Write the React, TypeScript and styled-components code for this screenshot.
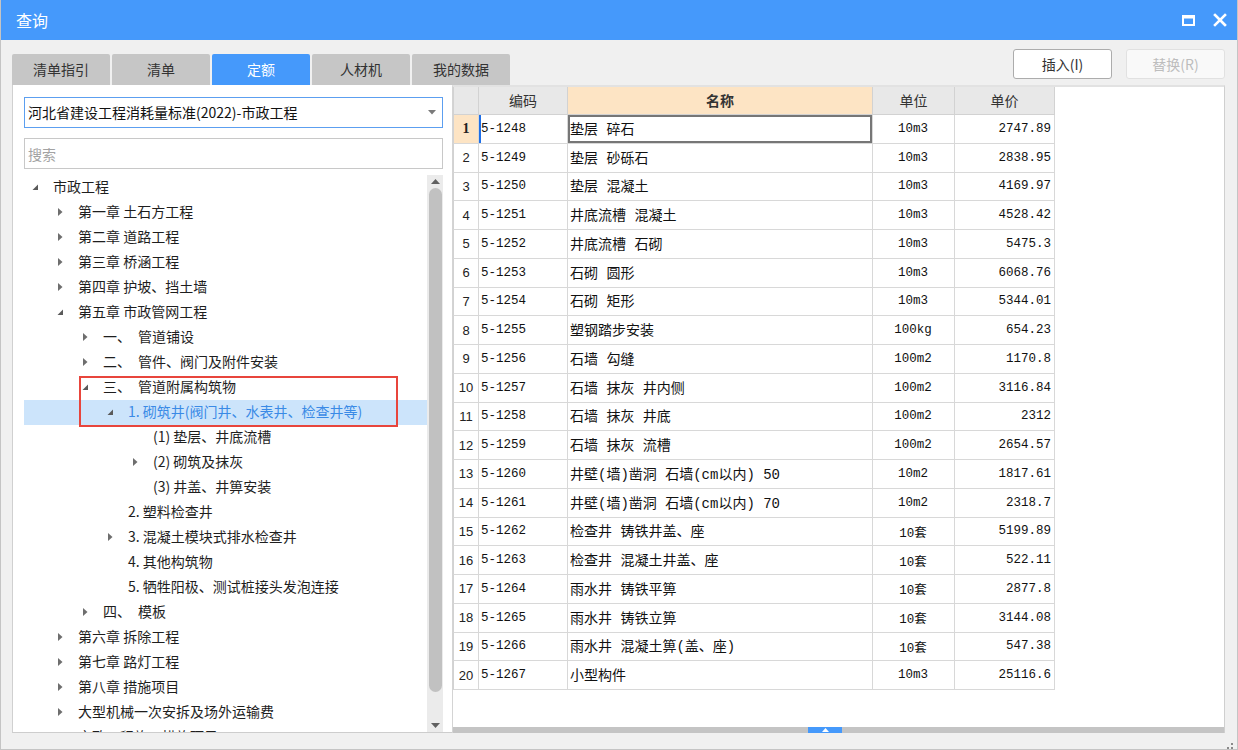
import React from 'react';
import styled, { createGlobalStyle } from 'styled-components';

const GlobalStyle = createGlobalStyle`
  html, body {
    margin: 0;
    padding: 0;
    background: #ffffff;
  }
  body {
    font-family: "Noto Sans CJK SC", "Liberation Sans", sans-serif;
  }
  * {
    box-sizing: border-box;
  }
`;

const Window = styled.div`
  position: relative;
  width: 1238px;
  height: 750px;
  display: flex;
  flex-direction: column;
  background: #f0f0f0;
  border: 1px solid #c4c4c4;
  border-top: none;
  overflow: hidden;
`;

const TitleBar = styled.div`
  flex: none;
  height: 40px;
  display: flex;
  align-items: center;
  padding: 0 10px 0 15px;
  background: #4599fb;
  color: #ffffff;
  font-size: 16px;
`;

const TitleText = styled.span`
  flex: 1;
`;

const WinControls = styled.div`
  display: flex;
  align-items: center;
  gap: 18px;
`;

const TopRow = styled.div`
  flex: none;
  height: 45px;
  display: flex;
  padding: 0 12px 0 11px;
`;

const Tabs = styled.div`
  align-self: flex-end;
  display: flex;
  gap: 2px;
`;

const Tab = styled.div<{ $active?: boolean }>`
  width: 98px;
  height: 31px;
  display: flex;
  align-items: center;
  justify-content: center;
  padding-bottom: 1px;
  border-radius: 2px 2px 0 0;
  font-size: 14px;
  background: ${({ $active }) => ($active ? '#4599fb' : '#c6c6c6')};
  color: ${({ $active }) => ($active ? '#ffffff' : '#333333')};
`;

const Buttons = styled.div`
  margin-left: auto;
  margin-top: 9px;
  display: flex;
  gap: 14px;
  align-self: flex-start;
`;

const Button = styled.div<{ $disabled?: boolean }>`
  width: 99px;
  height: 30px;
  display: flex;
  align-items: center;
  justify-content: center;
  border-radius: 3px;
  font-size: 14px;
  background: ${({ $disabled }) => ($disabled ? '#f9f9f9' : '#ffffff')};
  border: 1px solid ${({ $disabled }) => ($disabled ? '#e1e1e1' : '#acacac')};
  color: ${({ $disabled }) => ($disabled ? '#bdbdbd' : '#333333')};
`;

const Main = styled.div`
  flex: none;
  height: 648px;
  display: flex;
  padding: 0 12px 0 11px;
`;

const LeftPanel = styled.div`
  width: 440px;
  flex: none;
  display: flex;
  flex-direction: column;
  background: #ffffff;
  border-left: 1px solid #d0d0d0;
  border-bottom: 1px solid #cdcdcd;
  padding: 12px 9px 0 11px;
`;

const Dropdown = styled.div`
  height: 31px;
  flex: none;
  display: flex;
  align-items: center;
  justify-content: space-between;
  padding: 0 6px 1px 3px;
  border: 1px solid #5c9ff0;
  font-size: 14px;
  color: #111111;
`;

const Search = styled.input`
  height: 31px;
  flex: none;
  margin-top: 10px;
  padding: 0 3px;
  border: 1px solid #c8c8c8;
  outline: none;
  font-family: "Noto Sans CJK SC", sans-serif;
  font-size: 14px;
  color: #333333;
  &::placeholder {
    color: #a3a3a3;
  }
`;

const TreeArea = styled.div`
  position: relative;
  flex: 1;
  min-height: 0;
  margin-top: 6px;
  display: flex;
  overflow: hidden;
`;

const TreeList = styled.div`
  flex: 1;
  overflow: hidden;
`;

const TreeRow = styled.div<{ $level: number; $selected?: boolean }>`
  height: 25px;
  display: flex;
  align-items: center;
  padding-left: ${({ $level }) => 4 + $level * 25}px;
  padding-bottom: 3px;
  white-space: nowrap;
  font-size: 14px;
  background: ${({ $selected }) => ($selected ? '#cce4fb' : 'transparent')};
  color: ${({ $selected }) => ($selected ? '#3a8ae6' : '#1e1e1e')};
`;

const Toggle = styled.span`
  width: 14px;
  height: 14px;
  flex: none;
  margin-right: 11px;
  margin-top: 2px;
  display: flex;
  align-items: center;
  justify-content: center;
`;

const Highlight = styled.div`
  position: absolute;
  left: 55px;
  top: 201px;
  width: 319px;
  height: 51px;
  border: 2px solid #e8453c;
  pointer-events: none;
`;

const ScrollBar = styled.div`
  width: 16px;
  flex: none;
  display: flex;
  flex-direction: column;
  align-items: center;
  background: #ebebeb;
`;

const ScrollBtn = styled.div<{ $h: number }>`
  height: ${({ $h }) => $h}px;
  flex: none;
  display: flex;
  align-items: center;
  justify-content: center;
`;

const Thumb = styled.div`
  width: 13px;
  height: 504px;
  margin-top: 1px;
  flex: none;
  border-radius: 7px;
  background: #c1c1c1;
`;

const ScrollSpacer = styled.div`
  flex: 1;
`;

const RightPanel = styled.div`
  flex: 1;
  display: flex;
  flex-direction: column;
  border-left: 1px solid #d4d4d4;
  border-top: 2px solid #e2e2e2;
  border-right: 1px solid #cfcfcf;
`;

const GridArea = styled.div`
  flex: 1;
  background: #ffffff;
  overflow: hidden;
`;

const Grid = styled.div`
  display: grid;
  grid-template-columns: 26px 89px 305px 82px 100px;
  grid-template-rows: 28px repeat(20, 28.75px);
  width: max-content;
`;

const HeadCell = styled.div<{ $accent?: boolean; $first?: boolean }>`
  display: flex;
  align-items: center;
  justify-content: center;
  padding-bottom: 2px;
  font-size: 14px;
  color: #333333;
  background: ${({ $accent }) => ($accent ? '#fde4c4' : '#e8e8e8')};
  font-weight: ${({ $accent }) => ($accent ? 700 : 400)};
  border-right: 1px solid #d2d2d2;
  border-bottom: 1px solid #d2d2d2;
  border-left: ${({ $first }) => ($first ? '1px solid #d2d2d2' : 'none')};
`;

const Cell = styled.div<{ $align?: 'left' | 'center' | 'right'; $mono?: boolean }>`
  display: flex;
  align-items: center;
  justify-content: ${({ $align }) =>
    $align === 'right' ? 'flex-end' : $align === 'center' ? 'center' : 'flex-start'};
  padding: ${({ $mono }) => ($mono ? '0 3px 0 2px' : '0 3px 2px 2px')};
  white-space: pre;
  overflow: hidden;
  color: #111111;
  font-family: "Liberation Mono", "Noto Sans CJK SC", monospace;
  font-size: ${({ $mono }) => ($mono ? '12.5px' : '14px')};
  border-right: 1px solid #d8d8d8;
  border-bottom: 1px solid #d8d8d8;
`;

const NumCell = styled.div<{ $current?: boolean }>`
  display: flex;
  align-items: center;
  justify-content: center;
  font-family: ${({ $current }) => ($current ? '"Liberation Serif", serif' : '"Liberation Sans", sans-serif')};
  font-weight: ${({ $current }) => ($current ? 700 : 400)};
  font-size: ${({ $current }) => ($current ? '14px' : '13px')};
  color: #222222;
  background: ${({ $current }) => ($current ? '#fde4c4' : '#ffffff')};
  border-left: 1px solid #d2d2d2;
  border-right: 1px solid #d8d8d8;
  border-bottom: 1px solid #d8d8d8;
`;

const CodeCell = styled(Cell)<{ $current?: boolean }>`
  box-shadow: ${({ $current }) => ($current ? 'inset 2px 0 0 #1e6fe8' : 'none')};
`;

const NameCell = styled(Cell)<{ $current?: boolean }>`
  box-shadow: ${({ $current }) => ($current ? 'inset 0 0 0 2px #767676' : 'none')};
`;

const Splitter = styled.div`
  flex: none;
  height: 6px;
  background: #c4c4c4;
  display: flex;
`;

const SplitHandle = styled.div`
  width: 34px;
  margin-left: 355px;
  background: #4599fb;
  display: flex;
  align-items: center;
  justify-content: center;
`;

const Grip = styled.div`
  position: absolute;
  right: 3px;
  bottom: 3px;
  width: 11px;
  height: 11px;
`;

type Node = {
  level: number;
  text: string;
  state?: 'open' | 'closed';
  selected?: boolean;
};

const tree: Node[] = [
  { level: 0, text: '市政工程', state: 'open' },
  { level: 1, text: '第一章 土石方工程', state: 'closed' },
  { level: 1, text: '第二章 道路工程', state: 'closed' },
  { level: 1, text: '第三章 桥涵工程', state: 'closed' },
  { level: 1, text: '第四章 护坡、挡土墙', state: 'closed' },
  { level: 1, text: '第五章 市政管网工程', state: 'open' },
  { level: 2, text: '一、\u2002管道铺设', state: 'closed' },
  { level: 2, text: '二、\u2002管件、阀门及附件安装', state: 'closed' },
  { level: 2, text: '三、\u2002管道附属构筑物', state: 'open' },
  { level: 3, text: '1. 砌筑井(阀门井、水表井、检查井等)', state: 'open', selected: true },
  { level: 4, text: '(1) 垫层、井底流槽' },
  { level: 4, text: '(2) 砌筑及抹灰', state: 'closed' },
  { level: 4, text: '(3) 井盖、井箅安装' },
  { level: 3, text: '2. 塑料检查井' },
  { level: 3, text: '3. 混凝土模块式排水检查井', state: 'closed' },
  { level: 3, text: '4. 其他构筑物' },
  { level: 3, text: '5. 牺牲阳极、测试桩接头发泡连接' },
  { level: 2, text: '四、\u2002模板', state: 'closed' },
  { level: 1, text: '第六章 拆除工程', state: 'closed' },
  { level: 1, text: '第七章 路灯工程', state: 'closed' },
  { level: 1, text: '第八章 措施项目', state: 'closed' },
  { level: 1, text: '大型机械一次安拆及场外运输费', state: 'closed' },
  { level: 1, text: '市政工程施工措施项目', state: 'closed' },
];

const rows: [string, string, string, string][] = [
  ['5-1248', '垫层 碎石', '10m3', '2747.89'],
  ['5-1249', '垫层 砂砾石', '10m3', '2838.95'],
  ['5-1250', '垫层 混凝土', '10m3', '4169.97'],
  ['5-1251', '井底流槽 混凝土', '10m3', '4528.42'],
  ['5-1252', '井底流槽 石砌', '10m3', '5475.3'],
  ['5-1253', '石砌 圆形', '10m3', '6068.76'],
  ['5-1254', '石砌 矩形', '10m3', '5344.01'],
  ['5-1255', '塑钢踏步安装', '100kg', '654.23'],
  ['5-1256', '石墙 勾缝', '100m2', '1170.8'],
  ['5-1257', '石墙 抹灰 井内侧', '100m2', '3116.84'],
  ['5-1258', '石墙 抹灰 井底', '100m2', '2312'],
  ['5-1259', '石墙 抹灰 流槽', '100m2', '2654.57'],
  ['5-1260', '井壁(墙)凿洞 石墙(cm以内) 50', '10m2', '1817.61'],
  ['5-1261', '井壁(墙)凿洞 石墙(cm以内) 70', '10m2', '2318.7'],
  ['5-1262', '检查井 铸铁井盖、座', '10套', '5199.89'],
  ['5-1263', '检查井 混凝土井盖、座', '10套', '522.11'],
  ['5-1264', '雨水井 铸铁平箅', '10套', '2877.8'],
  ['5-1265', '雨水井 铸铁立箅', '10套', '3144.08'],
  ['5-1266', '雨水井 混凝土箅(盖、座)', '10套', '547.38'],
  ['5-1267', '小型构件', '10m3', '25116.6'],
];

const ToggleIcon = ({ state }: { state?: 'open' | 'closed' }) => {
  if (!state) return <Toggle />;
  return (
    <Toggle>
      <svg width="14" height="14" viewBox="0 0 14 14">
        {state === 'closed' ? (
          <polygon points="5,3 9.5,7 5,11" fill="#6e6e6e" />
        ) : (
          <polygon points="10,4.5 10,10 4.5,10" fill="#5a5a5a" />
        )}
      </svg>
    </Toggle>
  );
};

export default function App() {
  return (
    <Window>
      <GlobalStyle />
      <TitleBar>
        <TitleText>查询</TitleText>
        <WinControls>
          <svg width="13" height="11" viewBox="0 0 13 11">
            <rect x="1" y="1.5" width="11" height="8.5" fill="none" stroke="#fff" strokeWidth="2" />
            <rect x="0" y="0" width="13" height="3.5" fill="#fff" />
          </svg>
          <svg width="14" height="14" viewBox="0 0 14 14">
            <path d="M2 2 L12 12 M12 2 L2 12" stroke="#fff" strokeWidth="2.6" strokeLinecap="square" />
          </svg>
        </WinControls>
      </TitleBar>

      <TopRow>
        <Tabs>
          <Tab>清单指引</Tab>
          <Tab>清单</Tab>
          <Tab $active>定额</Tab>
          <Tab>人材机</Tab>
          <Tab>我的数据</Tab>
        </Tabs>
        <Buttons>
          <Button>插入(I)</Button>
          <Button $disabled>替换(R)</Button>
        </Buttons>
      </TopRow>

      <Main>
        <LeftPanel>
          <Dropdown>
            <span>河北省建设工程消耗量标准(2022)-市政工程</span>
            <svg width="8" height="5" viewBox="0 0 8 5">
              <polygon points="0,0 8,0 4,4.5" fill="#7a7a7a" />
            </svg>
          </Dropdown>
          <Search placeholder="搜索" />
          <TreeArea>
            <TreeList>
              {tree.map((n, i) => (
                <TreeRow key={i} $level={n.level} $selected={n.selected}>
                  <ToggleIcon state={n.state} />
                  {n.text}
                </TreeRow>
              ))}
            </TreeList>
            <ScrollBar>
              <ScrollBtn $h={12}>
                <svg width="9" height="5" viewBox="0 0 9 5">
                  <polygon points="0,5 9,5 4.5,0" fill="#606060" />
                </svg>
              </ScrollBtn>
              <Thumb />
              <ScrollSpacer />
              <ScrollBtn $h={14}>
                <svg width="9" height="5" viewBox="0 0 9 5">
                  <polygon points="0,0 9,0 4.5,5" fill="#606060" />
                </svg>
              </ScrollBtn>
            </ScrollBar>
            <Highlight />
          </TreeArea>
        </LeftPanel>

        <RightPanel>
          <GridArea>
            <Grid>
              <HeadCell $first />
              <HeadCell>编码</HeadCell>
              <HeadCell $accent>名称</HeadCell>
              <HeadCell>单位</HeadCell>
              <HeadCell>单价</HeadCell>
              {rows.map((r, i) => (
                <React.Fragment key={r[0]}>
                  <NumCell $current={i === 0}>{i + 1}</NumCell>
                  <CodeCell $mono $current={i === 0}>{r[0]}</CodeCell>
                  <NameCell $current={i === 0}>{r[1]}</NameCell>
                  <Cell $mono $align="center">{r[2]}</Cell>
                  <Cell $mono $align="right">{r[3]}</Cell>
                </React.Fragment>
              ))}
            </Grid>
          </GridArea>
          <Splitter>
            <SplitHandle>
              <svg width="7" height="4" viewBox="0 0 7 4">
                <polygon points="0,4 7,4 3.5,0" fill="#ffffff" />
              </svg>
            </SplitHandle>
          </Splitter>
        </RightPanel>
      </Main>

      <Grip>
        <svg width="11" height="11" viewBox="0 0 11 11">
          <rect x="8" y="0" width="2" height="2" fill="#8a8a8a" />
          <rect x="4" y="4" width="2" height="2" fill="#8a8a8a" />
          <rect x="8" y="4" width="2" height="2" fill="#8a8a8a" />
          <rect x="0" y="8" width="2" height="2" fill="#8a8a8a" />
          <rect x="4" y="8" width="2" height="2" fill="#8a8a8a" />
          <rect x="8" y="8" width="2" height="2" fill="#8a8a8a" />
        </svg>
      </Grip>
    </Window>
  );
}
